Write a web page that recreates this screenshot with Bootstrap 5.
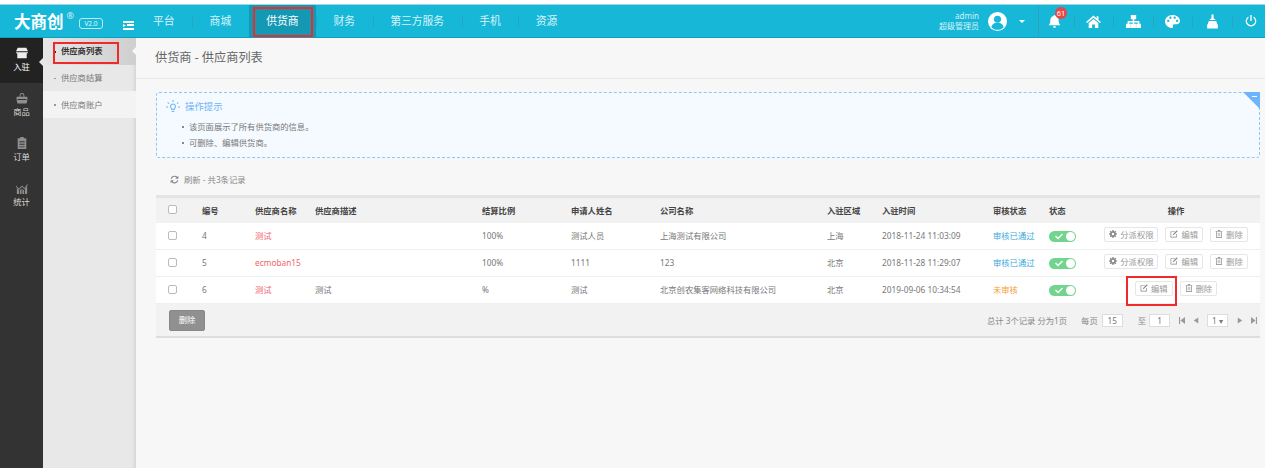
<!DOCTYPE html>
<html lang="zh-CN">
<head>
<meta charset="utf-8">
<title>供应商列表</title>
<link rel="stylesheet" href="https://cdn.jsdelivr.net/npm/bootstrap@5.3.0/dist/css/bootstrap.min.css">
<style>
html,body{height:100%;overflow:hidden}
body{font-family:"Noto Sans","Noto Sans CJK SC",sans-serif;font-size:8.3px;color:#777;background:#fff;line-height:1.2}
svg{display:block;fill:currentColor}
.shell{height:468px;padding-top:4px}
.topbar{height:34px;background:#17b7d8;color:#fff;padding:0;flex-wrap:nowrap;border-top:1px solid #9fd8e4;border-bottom:1px solid #0f9fbd;align-items:stretch;justify-content:flex-start}
.brand-box{width:135.5px;flex:none;padding-left:14px}
.brand-name{font-size:16.5px;font-weight:700;font-family:"Noto Sans CJK SC",sans-serif;line-height:1}
.brand-reg{font-size:9px;margin:-11px 0 0 3px;opacity:.8;line-height:1}
.brand-ver{width:24px;height:11px;border:1px solid #bfe9f2;border-radius:3px;font-size:6.5px;text-align:center;line-height:9px;margin:5px 0 0 5px;color:#dff;flex:none}
.brand-fold{width:11px;margin:8px 0 0 20px;flex:none}
.main-menu{margin:0;padding:0;list-style:none}
.main-menu>li{position:relative;font-size:10.8px;color:#d7f3f9;padding:0 17.5px;display:flex;align-items:center;white-space:nowrap}
.main-menu>li+li::before{content:"";position:absolute;left:0;top:11px;height:11px;width:1px;background:#2aa5c0}
.main-menu>li.on{background:#1399b4;color:#fff}
.main-menu>li.on::before{display:none}
.redmark{position:absolute;border:2px solid #ee2a2a;pointer-events:none}
.mark-nav{left:4px;top:2px;width:60px;height:30px}
.user-box{text-align:right;font-size:8px;line-height:10.5px;color:#d5f2f8;width:60px}
.avatar{width:19px;height:19px;margin-left:9px}
.caret{width:0;height:0;border:3.5px solid transparent;border-top:3.5px solid #fff;border-bottom:0;margin:0 13px 0 12px}
.tools{border-left:1px solid #2aa5c0;height:100%}
.tool{width:39.5px;height:100%;position:relative;display:flex;align-items:center;justify-content:center}
.tool+.tool::before{content:"";position:absolute;left:-.5px;top:11px;height:11px;width:1px;background:#2aa5c0}
.tool svg{width:15px;height:15px}
.tool:first-child{width:35px;padding-right:4px}
.tool:first-child svg{width:13px;height:13px}
.tool:last-child{width:33px;padding-left:4px}
.tool:last-child svg{width:12px;height:12px}
.bubble{position:absolute;left:16px;top:2px;width:12px;height:12px;border-radius:50%;background:#ec4545;color:#fff;font-size:7.5px;line-height:12px;text-align:center}
.body-row{height:430px}
.side{width:43px;background:#333;flex:none;color:#e8e8e8}
.side-item{height:45px;text-align:center;padding-top:9px;position:relative;font-size:8.3px;color:#d8d8d8}
.side-item svg{width:12px;height:12px;margin:0 auto 3px;color:#8f8f8f}
.side-item.on{background:#222;color:#fff}
.side-item.on svg{color:#eee}
.side-item.on::after{content:"";position:absolute;right:0;top:20px;border:4px solid transparent;border-right-color:#e6e6e6;border-left:0}
.sub{width:93px;background:#e8e8e8;flex:none;box-shadow:inset -4px 0 4px -3px #ccc}
.sub-item{height:26.7px;padding-left:18px;display:flex;align-items:center;position:relative;color:#777}
.sub-item::before{content:"";position:absolute;left:11px;top:13px;width:1.5px;height:1.5px;background:#999}
.sub-item.on{background:linear-gradient(90deg,#e6e6e6,#cfcfcf);color:#333;font-weight:600}
.sub-item.on::before{background:#333}
.sub-item.on::after{content:"";position:absolute;right:0;top:9px;border:4px solid transparent;border-right-color:#f7f7f7;border-left:0}
.sub-item.pale{background:#f3f3f3}
.mark-sub{left:10px;top:4px;width:66px;height:22px}
.page{flex:1;background:#f7f7f7;min-width:0}
.page-head{height:41px;padding-left:19px;font-size:12.2px;color:#666;border-bottom:1px solid #e8e8e8;display:flex;align-items:center}
.page-in{padding:13px 5px 0 20px}
.tipbox{height:66px;background:#f4faff;border:1px dashed #90c8f5;border-radius:3px;padding:7px 0 0 9px;position:relative}
.tip-title{color:#6fb3f7;font-size:9.4px;gap:5px}
.tip-title svg{width:14px;height:14px;color:#6fb3f7}
.tip-line{margin:8.5px 0 0 23px;position:relative;color:#777;font-size:8.3px;line-height:7px}
.tip-line::before{content:"";position:absolute;left:-7px;top:3px;width:2px;height:2px;background:#888}
.tip-line+.tip-line{margin-top:9px}
.tip-corner{position:absolute;right:-1px;top:-1px;width:0;height:0;border-top:17px solid #6db4fb;border-left:17px solid transparent}
.tip-minus{position:absolute;right:2px;top:3px;width:5px;height:1px;background:#fff}
.refresh{height:37px;padding:6px 0 0 14px;gap:5px;color:#888}
.refresh svg{width:9px;height:9px}
.grid-table{table-layout:fixed;width:1104px;margin:0;border-collapse:separate;border-spacing:0;--bs-table-bg:transparent;color:#777;font-size:8.3px}
.grid-table th,.grid-table td{padding:0;vertical-align:middle;border:0;white-space:nowrap;color:#777;box-shadow:none}
.grid-table thead th{height:28px;background:#f2f2f2;border-top:3px solid #e4e4e4;color:#444;font-weight:600}
.grid-table tbody td{height:27px;background:#fff;border-bottom:1px solid #efefef}
.grid-table tfoot td{height:34px;background:#f2f2f2;border-bottom:2px solid #ddd;padding-top:1px}
.tick{width:9px;height:9px;border:1px solid #bbb;border-radius:2px;background:#fff;margin:0 0 2px 12px;display:block}
.grid-table td.name-red{color:#f2666c}
.grid-table td.st-pass{color:#3ba9dc}
.grid-table td.st-wait{color:#f4a032}
.toggle{display:block;width:27px;height:11px;border-radius:6px;background:#72d58d;position:relative}
.toggle::after{content:"";position:absolute;right:1px;top:1px;width:9px;height:9px;border-radius:50%;background:#fff}
.toggle svg{position:absolute;left:6px;top:2px;width:8px;height:7px;color:#fff}
.ops{gap:7px;margin-bottom:4px}
.op-btn{height:15px;padding:0 4px;border:1px solid #e6e6e6;border-radius:2px;background:#fff;color:#999;font-size:8.3px;gap:3px;line-height:13px}
.op-btn svg{width:8px;height:8px;color:#888}
.op-wrap{position:relative}
.mark-op{left:-9px;top:-5px;width:51px;height:30px}
.del-btn{width:36px;height:21px;background:#909090;color:#fff;border:1px solid #888;border-radius:2px;font-size:8.3px;padding:0;margin-left:13px}
.pager{padding-right:3px;color:#888;justify-content:flex-end}
.pg-box{height:13px;width:21px;border:1px solid #ddd;background:#fff;text-align:center;line-height:11px;color:#777}
.pg-ic{width:6px;height:7px;color:#999;margin-left:8.5px}
.gap-wide{margin-left:15px}
.gap-mid{margin-left:14px}
.gap-thin{margin-left:3px}
</style>
</head>
<body>
<div class="shell">
  <nav class="navbar topbar">
    <div class="brand-box d-flex align-items-center">
      <span class="brand-name">大商创</span><span class="brand-reg">®</span>
      <span class="brand-ver">V2.0</span>
      <svg class="brand-fold" viewBox="0 0 11 9"><path d="M0 0h11v2H0zM4 3h7v2H4zM0 3l3 1.500L0 6zM0 7h11v2H0z"/></svg>
    </div>
    <ul class="main-menu d-flex">
      <li>平台</li><li>商城</li>
      <li class="on">供货商<span class="redmark mark-nav"></span></li>
      <li>财务</li><li>第三方服务</li><li>手机</li><li>资源</li>
    </ul>
    <div class="ms-auto d-flex align-items-center">
      <div class="user-box">admin<br>超级管理员</div>
      <svg class="avatar" viewBox="0 0 20 20"><circle cx="10" cy="10" r="10" fill="#fff"/><circle cx="10" cy="7.600" r="3.700" fill="#17b7d8"/><path d="M3.500 16c.8-3.600 3.400-4.800 6.500-4.800s5.700 1.200 6.500 4.800c-1.600 1.700-3.900 2.700-6.500 2.700S5.100 17.700 3.500 16z" fill="#17b7d8"/></svg>
      <span class="caret"></span>
      <div class="tools d-flex align-items-center">
        <div class="tool"><svg viewBox="0 0 14 14"><path d="M7 0a1 1 0 0 1 1 1.100C10.300 1.500 11.500 3.300 11.500 6c0 3 .9 4 1.800 5H.7c.9-1 1.800-2 1.800-5 0-2.700 1.200-4.500 3.500-4.900A1 1 0 0 1 7 0zM5.300 12h3.400a1.700 1.700 0 0 1-3.400 0z"/></svg><span class="bubble">61</span></div>
        <div class="tool"><svg viewBox="0 0 14 14"><path d="M7 1.500 0 7.500l1 1 6-5.100 6 5.100 1-1-2.400-2V2h-1.700v2zM2.500 8.500V13h3.200V9.800h2.600V13h3.200V8.500L7 4.700z"/></svg></div>
        <div class="tool"><svg viewBox="0 0 14 14"><path d="M4.500 1h5v4H7.700v1.500H12.500V9H14v4H9.500V9h1.500V8H7.700v1H9.300v4H4.700V9h1.600V8H3v1h1.500v4H0V9h1.500V6.500h4.800V5H4.500z"/></svg></div>
        <div class="tool"><svg viewBox="0 0 14 14"><path d="M7 1C3.200 1 0 3.700 0 7s3 6 6.300 6c1.100 0 1.400-.8 1.100-1.500-.4-1 .1-2 1.300-2h2.200C12.800 9.500 14 8.300 14 6.500 14 3.400 10.800 1 7 1zM3 7.500a1.100 1.100 0 1 1 0-2.200 1.100 1.100 0 0 1 0 2.200zm2-3a1.100 1.100 0 1 1 0-2.200 1.100 1.100 0 0 1 0 2.200zm4 0a1.100 1.100 0 1 1 0-2.200 1.100 1.100 0 0 1 0 2.200zm2.300 3a1.100 1.100 0 1 1 0-2.200 1.100 1.100 0 0 1 0 2.200z" fill-rule="evenodd"/></svg></div>
        <div class="tool"><svg viewBox="0 0 14 14"><path d="M6 .5h2v3.500l2.200 1.500H3.800L6 4zM3.500 6.500h7c.4 1.800 1 3 1.500 3.800v3.200H2v-3.200c.5-.8 1.100-2 1.500-3.800z"/></svg></div>
        <div class="tool"><svg viewBox="0 0 14 14"><path d="M6.200 0h1.600v7H6.200zM4 1.800v1.700a4.700 4.700 0 1 0 6 0V1.800a6.200 6.200 0 1 1-6 0z"/></svg></div>
      </div>
    </div>
  </nav>
  <div class="body-row d-flex">
    <aside class="side">
      <div class="side-item on"><svg viewBox="0 0 14 14"><path d="M2 1h10l2 4H0zM0 6h14c0 1-.8 1.700-1.500 1.700V13h-11V7.700C.8 7.700 0 7 0 6z"/></svg>入驻</div>
      <div class="side-item"><svg viewBox="0 0 14 14"><path d="M4.200 5.500V4a2.800 2.800 0 0 1 5.600 0v1.500H12c1 0 1.500.6 1.500 1.500l-.8 5.500c-.1.600-.6 1-1.200 1h-9c-.6 0-1.100-.4-1.200-1L.5 7c0-.9.500-1.500 1.500-1.500zm1.100 0h3.400V4a1.700 1.700 0 0 0-3.400 0zM1.800 8.200v1h10.400v-1z" fill-rule="evenodd"/></svg>商品</div>
      <div class="side-item"><svg viewBox="0 0 14 14"><path d="M5 0h4v1.500h3V14H2V1.500h3zM4 5v1h6V5zm0 3v1h6V8zm0 3v1h6v-1z" fill-rule="evenodd"/></svg>订单</div>
      <div class="side-item"><svg viewBox="0 0 14 14"><path d="M1 14V7l2.500 2.500V14zm3.500 0V9.500L6.500 7.500V14zm3 0V8l2 2v4zm3 0V8.500L13 5v9zM0 4l3.500 3.500L7 4l3 3 3-4.500.9.600L10.200 8.500 7 5.500 3.500 9 0 5.500z"/></svg>统计</div>
    </aside>
    <div class="sub">
      <div class="sub-item on">供应商列表<span class="redmark mark-sub"></span></div>
      <div class="sub-item">供应商结算</div>
      <div class="sub-item pale">供应商账户</div>
    </div>
    <main class="page">
      <div class="page-head">供货商 - 供应商列表</div>
      <div class="page-in">
        <div class="tipbox">
          <div class="tip-title d-flex align-items-center">
            <svg viewBox="0 0 14 14"><path d="M7 3.500a3 3 0 0 0-1.800 5.400V10h3.600V8.900A3 3 0 0 0 7 3.500zm0 1a2 2 0 0 1 1 3.700l-.2.100V9H6.200v-.7L6 8.200A2 2 0 0 1 7 4.500zM5.700 11h2.600v1H5.700zM6.500 0h1v2h-1zM0 6.500h2v1H0zM12 6.500h2v1h-2zM2 2l1.400 1.400-.7.700L1.300 2.700zM12 2l.7.700-1.400 1.400-.7-.7z" fill-rule="evenodd"/></svg>
            操作提示
          </div>
          <div class="tip-line">该页面展示了所有供货商的信息。</div>
          <div class="tip-line">可删除、编辑供货商。</div>
          <span class="tip-corner"></span><span class="tip-minus"></span>
        </div>
        <div class="refresh d-flex align-items-center">
          <svg viewBox="0 0 14 14"><path d="M7 1a6 6 0 0 1 4.300 1.800L13 1v5H8l2-2A4.200 4.200 0 0 0 2.900 6H1.100A6 6 0 0 1 7 1zM1 8h5l-2 2a4.200 4.200 0 0 0 7.100-2h1.800A6 6 0 0 1 2.700 11.200L1 13z"/></svg>
          刷新 - 共3条记录
        </div>
        <table class="table grid-table">
          <colgroup><col style="width:46px"><col style="width:53px"><col style="width:60px"><col style="width:167px"><col style="width:89px"><col style="width:89px"><col style="width:167px"><col style="width:55px"><col style="width:111px"><col style="width:56px"><col style="width:43px"><col></colgroup>
          <thead><tr>
            <th><span class="tick"></span></th><th>编号</th><th>供应商名称</th><th>供应商描述</th><th>结算比例</th><th>申请人姓名</th><th>公司名称</th><th>入驻区域</th><th>入驻时间</th><th>审核状态</th><th>状态</th><th class="text-center">操作</th>
          </tr></thead>
          <tbody>
            <tr>
              <td><span class="tick"></span></td><td>4</td><td class="name-red">测试</td><td></td><td>100%</td><td>测试人员</td><td>上海测试有限公司</td><td>上海</td><td>2018-11-24 11:03:09</td><td class="st-pass">审核已通过</td>
              <td><span class="toggle"><svg viewBox="0 0 8 7"><path d="M0 3.500 1 2.500l2 2L7 .5l1 1-5 5z"/></svg></span></td>
              <td><div class="ops d-flex justify-content-center">
                <button class="btn op-btn d-flex align-items-center"><svg viewBox="0 0 14 14"><path d="M6 0h2l.4 2 1.300.5L11.400 1.400l1.200 1.200-1.100 1.700.5 1.300 2 .4v2l-2 .4-.5 1.300 1.100 1.700-1.200 1.200-1.700-1.100-1.300.5L8 14H6l-.4-2-1.300-.5-1.700 1.100-1.200-1.200 1.100-1.700-.5-1.300L0 8V6l2-.4.5-1.300L1.400 2.600l1.200-1.200 1.700 1.100L5.600 2zM7 4.800a2.200 2.200 0 1 0 0 4.400 2.200 2.200 0 0 0 0-4.400z" fill-rule="evenodd"/></svg>分派权限</button>
                <button class="btn op-btn d-flex align-items-center"><svg viewBox="0 0 14 14"><path d="M1 2h8v1.200H2.200v8.600h8.600V7H12v6H1zM12 .5 13.500 2 7 8.500l-2 .5.500-2z"/></svg>编辑</button>
                <button class="btn op-btn d-flex align-items-center"><svg viewBox="0 0 14 14"><path d="M5 0h4v2h4v1.200h-1V14H2V3.200H1V2h4zm1.200 1.200V2h1.600v-.8zM3.200 3.200v9.600h7.600V3.200zM5 5h1v6H5zm3 0h1v6H8z" fill-rule="evenodd"/></svg>删除</button>
              </div></td>
            </tr>
            <tr>
              <td><span class="tick"></span></td><td>5</td><td class="name-red">ecmoban15</td><td></td><td>100%</td><td>1111</td><td>123</td><td>北京</td><td>2018-11-28 11:29:07</td><td class="st-pass">审核已通过</td>
              <td><span class="toggle"><svg viewBox="0 0 8 7"><path d="M0 3.500 1 2.500l2 2L7 .5l1 1-5 5z"/></svg></span></td>
              <td><div class="ops d-flex justify-content-center">
                <button class="btn op-btn d-flex align-items-center"><svg viewBox="0 0 14 14"><path d="M6 0h2l.4 2 1.300.5L11.400 1.400l1.200 1.200-1.100 1.700.5 1.300 2 .4v2l-2 .4-.5 1.300 1.100 1.700-1.200 1.200-1.700-1.100-1.300.5L8 14H6l-.4-2-1.300-.5-1.700 1.100-1.200-1.200 1.100-1.700-.5-1.300L0 8V6l2-.4.5-1.300L1.400 2.600l1.200-1.200 1.700 1.100L5.600 2zM7 4.800a2.200 2.200 0 1 0 0 4.400 2.200 2.200 0 0 0 0-4.400z" fill-rule="evenodd"/></svg>分派权限</button>
                <button class="btn op-btn d-flex align-items-center"><svg viewBox="0 0 14 14"><path d="M1 2h8v1.200H2.200v8.600h8.600V7H12v6H1zM12 .5 13.500 2 7 8.500l-2 .5.500-2z"/></svg>编辑</button>
                <button class="btn op-btn d-flex align-items-center"><svg viewBox="0 0 14 14"><path d="M5 0h4v2h4v1.200h-1V14H2V3.200H1V2h4zm1.200 1.200V2h1.600v-.8zM3.200 3.200v9.600h7.600V3.200zM5 5h1v6H5zm3 0h1v6H8z" fill-rule="evenodd"/></svg>删除</button>
              </div></td>
            </tr>
            <tr>
              <td><span class="tick"></span></td><td>6</td><td class="name-red">测试</td><td>测试</td><td>%</td><td>测试</td><td>北京创农集客网络科技有限公司</td><td>北京</td><td>2019-09-06 10:34:54</td><td class="st-wait">未审核</td>
              <td><span class="toggle"><svg viewBox="0 0 8 7"><path d="M0 3.500 1 2.500l2 2L7 .5l1 1-5 5z"/></svg></span></td>
              <td><div class="ops d-flex justify-content-center">
                <div class="op-wrap"><button class="btn op-btn d-flex align-items-center"><svg viewBox="0 0 14 14"><path d="M1 2h8v1.200H2.200v8.600h8.600V7H12v6H1zM12 .5 13.500 2 7 8.500l-2 .5.500-2z"/></svg>编辑</button><span class="redmark mark-op"></span></div>
                <button class="btn op-btn d-flex align-items-center"><svg viewBox="0 0 14 14"><path d="M5 0h4v2h4v1.200h-1V14H2V3.200H1V2h4zm1.200 1.200V2h1.600v-.8zM3.200 3.200v9.600h7.600V3.200zM5 5h1v6H5zm3 0h1v6H8z" fill-rule="evenodd"/></svg>删除</button>
              </div></td>
            </tr>
          </tbody>
          <tfoot><tr>
            <td colspan="4"><button class="btn del-btn">删除</button></td>
            <td colspan="8"><div class="pager d-flex align-items-center">
              <span>总计 3个记录 分为1页</span>
              <span class="gap-mid">每页</span><span class="pg-box ms-1">15</span>
              <span class="gap-wide">至</span><span class="pg-box gap-thin">1</span>
              <svg class="pg-ic" viewBox="0 0 8 8" preserveAspectRatio="none"><path d="M0 0h1.500v8H0zM8 0v8L2 4z"/></svg>
              <svg class="pg-ic" viewBox="0 0 8 8"><path d="M7 0v8L1 4z"/></svg>
              <span class="pg-box ms-2">1 ▾</span>
              <svg class="pg-ic" viewBox="0 0 8 8"><path d="M1 0v8l6-4z"/></svg>
              <svg class="pg-ic" viewBox="0 0 8 8" preserveAspectRatio="none"><path d="M0 0v8l6-4zM6.500 0H8v8H6.500z"/></svg>
            </div></td>
          </tr></tfoot>
        </table>
      </div>
    </main>
  </div>
</div>
<script src="https://cdn.jsdelivr.net/npm/bootstrap@5.3.0/dist/js/bootstrap.bundle.min.js"></script>
</body>
</html>
